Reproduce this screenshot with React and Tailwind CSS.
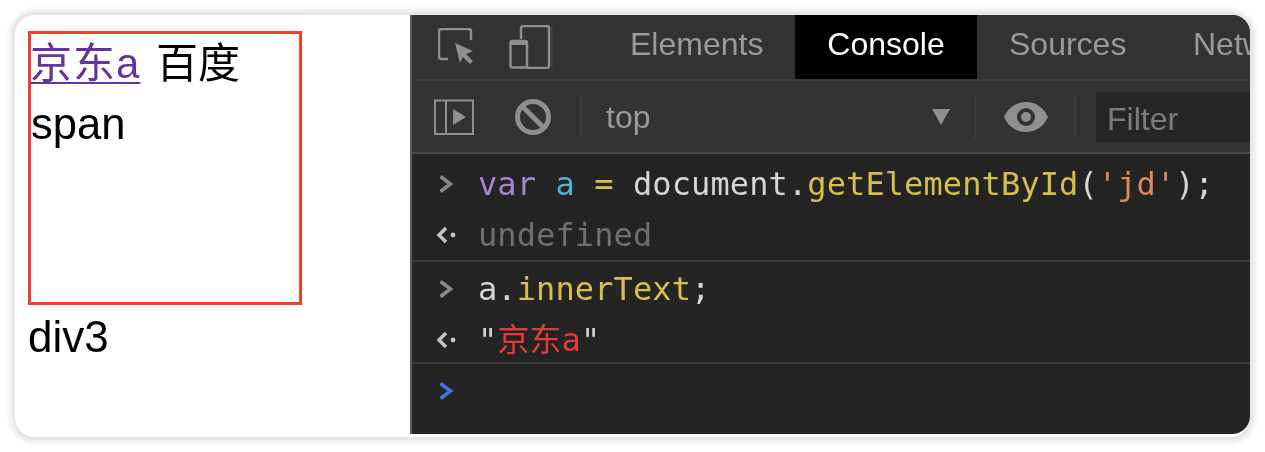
const mono = "font-['DejaVu_Sans_Mono','Noto_Sans_CJK_SC',monospace]";

const Chevron = ({ color = '#8a8a8a' }) => (
  <svg width="16" height="20" viewBox="0 0 16 20" fill="none">
    <path d="M2.500 2.500L12.500 10 2.500 17.500" stroke={color} strokeWidth="3.500" />
  </svg>
);

const ResultArrow = () => (
  <svg width="20" height="20" viewBox="0 0 20 20" fill="none">
    <path d="M10 3L3 10l7 7" stroke="#c4c4c4" strokeWidth="3.500" />
    <circle cx="17" cy="10" r="2.400" fill="#c4c4c4" />
  </svg>
);

const Divider = () => <div className="w-[2px] h-[42px] bg-[#3d3d3d] shrink-0" />;

const ConsoleRow = ({ icon, className = '', children }) => (
  <div className={`flex items-center ${className}`}>
    <div className="w-[66px] shrink-0 flex justify-center pl-[1px]">{icon}</div>
    <div className={`${mono} text-[32px] leading-[40px] tracking-[0.1px] whitespace-nowrap`}>{children}</div>
  </div>
);

export default function App() {
  return (
    <div className="h-[452px] bg-white pt-[15px] pl-[15px] overflow-hidden blur-[0.4px]">
      <div className="flex w-[1235px] h-[422px] bg-white rounded-[20px] shadow-[0_0_0_3px_#e6e6e6,0_0_0_6px_#f1f1f1,0_0_0_8px_#f9f9f9]">
        {/* page side */}
        <div className="w-[395px] shrink-0 pl-[13px] pt-[16px] text-black text-[44px] leading-[60px] font-['Liberation_Sans','Noto_Sans_CJK_SC',sans-serif]">
          <div className="box-border w-[274px] h-[274px] border-[3px] border-[#f53d28]">
            <div className="whitespace-nowrap text-[42px] -ml-[1px]">
              <a className="text-[#65329f] tracking-[1px] underline decoration-2 underline-offset-[4px]">京东a</a>
              <span className="ml-[4px]"> 百度</span>
            </div>
            <div className="text-[43.5px]">span</div>
          </div>
          <div className="pt-[2px]">div3</div>
        </div>

        {/* devtools */}
        <div className="w-[840px] h-[419px] flex flex-col border-l-2 border-[#5c5c5c] bg-[#242424] rounded-tr-[18px] rounded-br-[18px] overflow-hidden font-['Liberation_Sans',sans-serif]">
          <div className="h-[66px] shrink-0 flex bg-[#333333] border-b-2 border-[#3d3d3d] text-[32px] text-[#9a9a9a]">
            <div className="flex items-center w-[186px] shrink-0">
              <svg className="ml-[26px]" width="38" height="38" viewBox="0 0 38 38" fill="none">
                <path d="M10 31H3a2 2 0 0 1-2-2V3a2 2 0 0 1 2-2h28a2 2 0 0 1 2 2v9" stroke="#8f8f8f" strokeWidth="2.500" />
                <path d="M17 15l18 8-7 3 7 7-3 3-7-7-3 6z" fill="#8f8f8f" />
              </svg>
              <svg className="ml-[33px]" width="42" height="44" viewBox="0 0 42 44" fill="none">
                <path d="M12 14V3a2 2 0 0 1 2-2h24a2 2 0 0 1 2 2v38a2 2 0 0 1-2 2H18" stroke="#8f8f8f" strokeWidth="2.500" />
                <rect x="1.500" y="16" width="16.500" height="26.500" rx="2" stroke="#8f8f8f" strokeWidth="2.500" />
                <path d="M2 15h16v5H2z" fill="#8f8f8f" />
              </svg>
              <Divider />
            </div>
            <div className="flex items-center pl-[32px] pb-[6px] shrink-0 w-[197px]">Elements</div>
            <div className="flex items-center justify-center pb-[6px] w-[182px] h-[64px] shrink-0 bg-black text-white">Console</div>
            <div className="flex items-center pl-[32px] pb-[6px] w-[182px] shrink-0">Sources</div>
            <div className="flex items-center pl-[34px] pb-[6px] shrink-0">Network</div>
          </div>

          <div className="h-[73px] shrink-0 flex items-center bg-[#333333] border-b-2 border-[#4a4a4a] text-[32px]">
            <svg className="ml-[22px]" width="40" height="36" viewBox="0 0 40 36" fill="none">
              <rect x="1" y="1.500" width="38" height="33.500" stroke="#8f8f8f" strokeWidth="2" />
              <path d="M12 1v34" stroke="#8f8f8f" strokeWidth="2" />
              <path d="M19 10l13 8-13 8z" fill="#8f8f8f" />
            </svg>
            <svg className="ml-[40px]" width="38" height="38" viewBox="0 0 38 38" fill="none">
              <circle cx="19" cy="19" r="15.500" stroke="#8f8f8f" strokeWidth="5" />
              <path d="M8 8l22 22" stroke="#8f8f8f" strokeWidth="5" />
            </svg>
            <div className="ml-[28px]"><Divider /></div>
            <div className="ml-[24px] w-[326px] text-[#9a9a9a] shrink-0">top</div>
            <svg width="18" height="16" viewBox="0 0 18 16" className="shrink-0">
              <path d="M0 0h18l-9 16z" fill="#8f8f8f" />
            </svg>
            <div className="ml-[24px]"><Divider /></div>
            <svg className="ml-[28px] shrink-0" width="44" height="30" viewBox="0 0 44 30">
              <path fillRule="evenodd" d="M22 0c10 0 18 6 22 15-4 9-12 15-22 15S4 24 0 15C4 6 12 0 22 0zm0 6a9 9 0 1 0 0 18 9 9 0 0 0 0-18zm0 4a5 5 0 1 1 0 10 5 5 0 0 1 0-10z" fill="#8f8f8f" />
            </svg>
            <div className="ml-[26px]"><Divider /></div>
            <div className="ml-[20px] h-[50px] grow flex items-center pl-[11px] pt-[5px] bg-[#262626] text-[#7c7c7c]">Filter</div>
          </div>

          <ConsoleRow icon={<Chevron />} className="h-[56px] pt-[4px]">
            <span className="text-[#a783d4]">var</span>{' '}
            <span className="text-[#5aaed8]">a</span>{' '}
            <span className="text-[#d8bf4c]">=</span>{' '}
            <span className="text-[#d6d6d6]">document.</span>
            <span className="text-[#d8bf4c]">getElementById</span>
            <span className="text-[#d6d6d6]">(</span>
            <span className="text-[#e08a5a]">'jd'</span>
            <span className="text-[#d6d6d6]">);</span>
          </ConsoleRow>
          <ConsoleRow icon={<ResultArrow />} className="h-[52px] border-b-2 border-[#3a3a3a]">
            <span className="text-[#707070]">undefined</span>
          </ConsoleRow>
          <ConsoleRow icon={<Chevron />} className="h-[51px] pt-[3px]">
            <span className="text-[#d6d6d6]">a.</span>
            <span className="text-[#d8bf4c]">innerText</span>
            <span className="text-[#d6d6d6]">;</span>
          </ConsoleRow>
          <ConsoleRow icon={<ResultArrow />} className="h-[51px] pt-[5px] border-b-2 border-[#3a3a3a]">
            <span className="text-[#d0d0d0]">"</span>
            <span className="text-[#e03c3c]">京东a</span>
            <span className="text-[#d0d0d0]">"</span>
          </ConsoleRow>
          <ConsoleRow icon={<Chevron color="#3b78e0" />} className="h-[54px]" />
        </div>
      </div>
    </div>
  );
}
